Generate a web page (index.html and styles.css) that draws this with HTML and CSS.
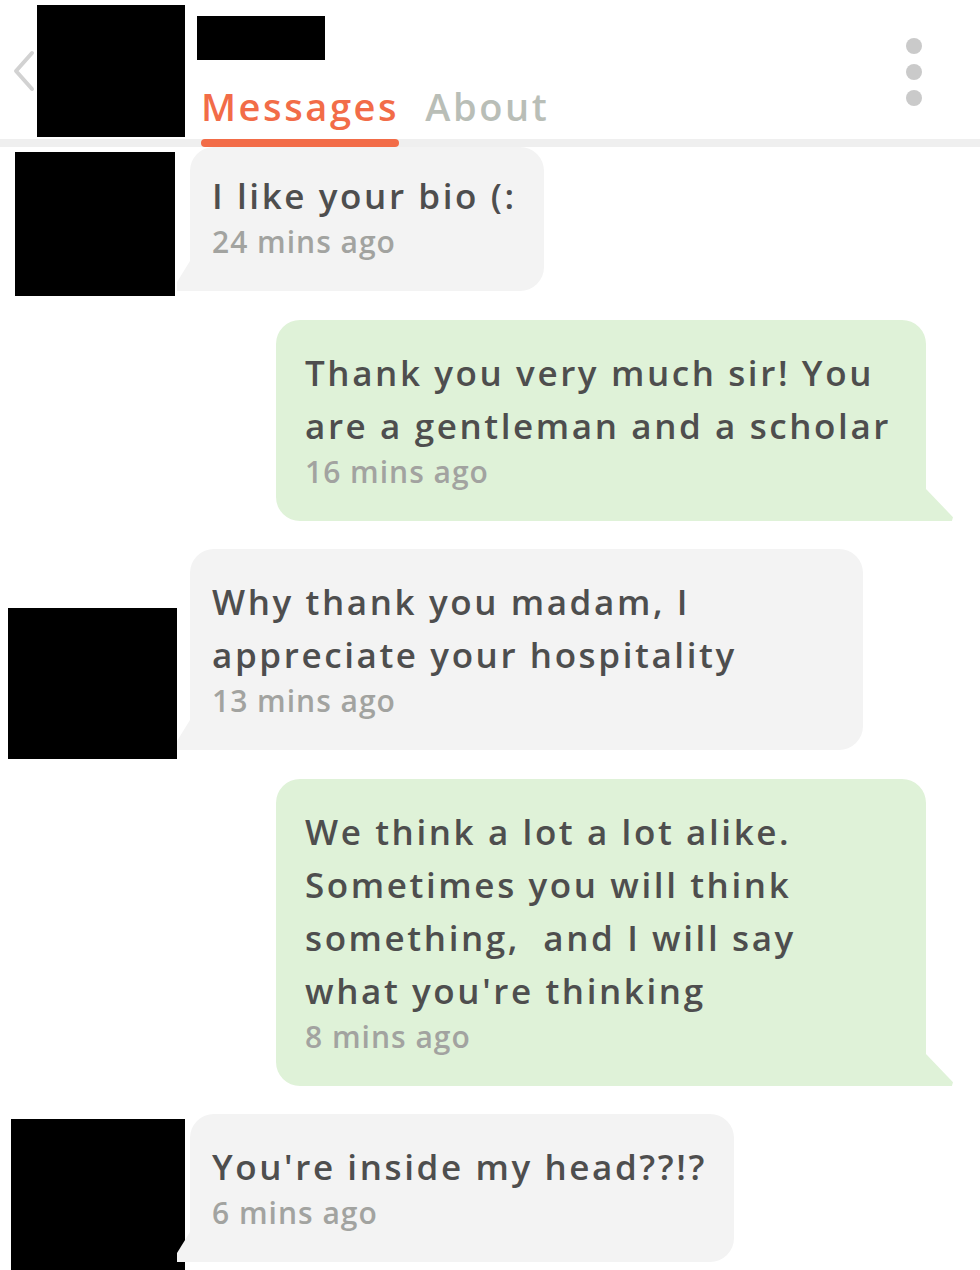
FILE: index.html
```html
<!DOCTYPE html>
<html lang="en">
<head>
    <meta charset="UTF-8">
    <meta name="viewport" content="width=device-width, initial-scale=1.0">
    <title>Messages</title>
    <link rel="stylesheet" href="styles.css">
</head>
<body>

<div class="header">
    <div class="back">
        <svg width="24" height="42" viewBox="0 0 24 42">
            <polyline points="20,3 4,21 20,39" fill="none" stroke="#d2d2d2" stroke-width="4" stroke-linecap="round" stroke-linejoin="round"/>
        </svg>
    </div>
    <div class="header-avatar"></div>
    <div class="title">
        <div class="name"></div>
        <div class="tabs">
            <div class="tab active">
                <span>Messages</span>
                <span class="underline"></span>
            </div>
            <div class="tab">About</div>
        </div>
    </div>
    <div class="menu">
        <span class="dot"></span>
        <span class="dot"></span>
        <span class="dot"></span>
    </div>
</div>

<div class="thread">
    <div class="row">
        <div class="avatar-slot"><div class="redact redact-1"></div></div>
        <div class="bubble in first">
            <div class="text">I like your bio (:</div>
            <div class="time">24 mins ago</div>
        </div>
    </div>

    <div class="row">
        <div class="bubble out">
            <div class="text">Thank you very much sir! You<br>are a gentleman and a scholar</div>
            <div class="time">16 mins ago</div>
        </div>
    </div>

    <div class="row">
        <div class="avatar-slot"><div class="redact redact-2"></div></div>
        <div class="bubble in wide">
            <div class="text">Why thank you madam, I<br>appreciate your hospitality</div>
            <div class="time">13 mins ago</div>
        </div>
    </div>

    <div class="row">
        <div class="bubble out">
            <div class="text">We think a lot a lot alike.<br>Sometimes you will think<br>something, &nbsp;and I will say<br>what you're thinking</div>
            <div class="time">8 mins ago</div>
        </div>
    </div>

    <div class="row">
        <div class="avatar-slot"><div class="redact redact-3"></div></div>
        <div class="bubble in">
            <div class="text">You're inside my head??!?</div>
            <div class="time">6 mins ago</div>
        </div>
    </div>
</div>

</body>
</html>
```

FILE: styles.css
```css
body {
    margin: 0;
    padding: 0;
    background: #fff;
    font-family: 'Open Sans', 'Liberation Sans', sans-serif;
    width: 980px;
    height: 1270px;
    overflow: hidden;
}

/* Header */
.header {
    display: flex;
    align-items: flex-start;
    height: 147px;
    background: linear-gradient(#efefef, #efefef) left bottom / 100% 8px no-repeat;
}

.back {
    width: 37px;
    padding: 50px 0 0 12px;
    box-sizing: border-box;
}

.header-avatar {
    width: 148px;
    height: 132px;
    margin-top: 5px;
    background: #000;
}

.title {
    margin-left: 12px;
    display: flex;
    flex-direction: column;
}

.name {
    width: 128px;
    height: 44px;
    margin-top: 16px;
    background: #000;
}

.tabs {
    display: flex;
    gap: 26px;
    margin-top: 24px;
    margin-left: 4px;
}

.tab {
    font-size: 38px;
    font-weight: 600;
    line-height: 44px;
    letter-spacing: 2.6px;
    color: #b9beb7;
}

.tab.active {
    display: flex;
    flex-direction: column;
    color: #f26c48;
}

.underline {
    height: 8px;
    margin-top: 11px;
    border-radius: 4px;
    background: #f26c48;
}

.menu {
    margin: 38px 58px 0 auto;
    display: flex;
    flex-direction: column;
    gap: 10px;
}

.dot {
    width: 16px;
    height: 16px;
    border-radius: 50%;
    background: #cacaca;
}

/* Thread */
.thread {
    display: flex;
    flex-direction: column;
    gap: 28px;
}

.row {
    display: flex;
    align-items: flex-start;
}

.avatar-slot {
    width: 190px;
    flex-shrink: 0;
}

.redact {
    background: #000;
}

.redact-1 {
    width: 160px;
    height: 144px;
    margin: 5px 0 -4px 15px;
}

.redact-2 {
    width: 169px;
    height: 151px;
    margin: 59px 0 -8px 8px;
}

.redact-3 {
    width: 174px;
    height: 160px;
    margin: 5px 0 -20px 11px;
}

.bubble {
    position: relative;
    box-sizing: border-box;
    border-radius: 24px;
    color: #4e4e4e;
}

.bubble.in {
    background: #f3f3f3;
    padding: 26px 27px 29px 22px;
    border-bottom-left-radius: 0;
}

.bubble.in.first {
    padding-top: 22px;
}

.bubble.in.wide {
    width: 673px;
}

.bubble.out {
    background: #dff2d8;
    width: 650px;
    margin-left: 276px;
    padding: 26px 33px 29px 29px;
    border-bottom-right-radius: 0;
}

/* bubble tails */
.bubble.in::after {
    content: "";
    position: absolute;
    left: -13px;
    bottom: 0;
    width: 13px;
    height: 30px;
    background: #f3f3f3;
    clip-path: polygon(100% 0, 100% 100%, 0 100%, 0 70%);
}

.bubble.out::after {
    content: "";
    position: absolute;
    right: -27px;
    bottom: 0;
    width: 27px;
    height: 32px;
    background: #dff2d8;
    clip-path: polygon(0 0, 100% 88%, 96% 100%, 0 100%);
}

.text {
    font-size: 35px;
    font-weight: 600;
    line-height: 53px;
    letter-spacing: 2.6px;
    white-space: nowrap;
}

.time {
    font-size: 30px;
    font-weight: 600;
    line-height: 40px;
    letter-spacing: 1px;
    color: #a2a3a0;
}
```
